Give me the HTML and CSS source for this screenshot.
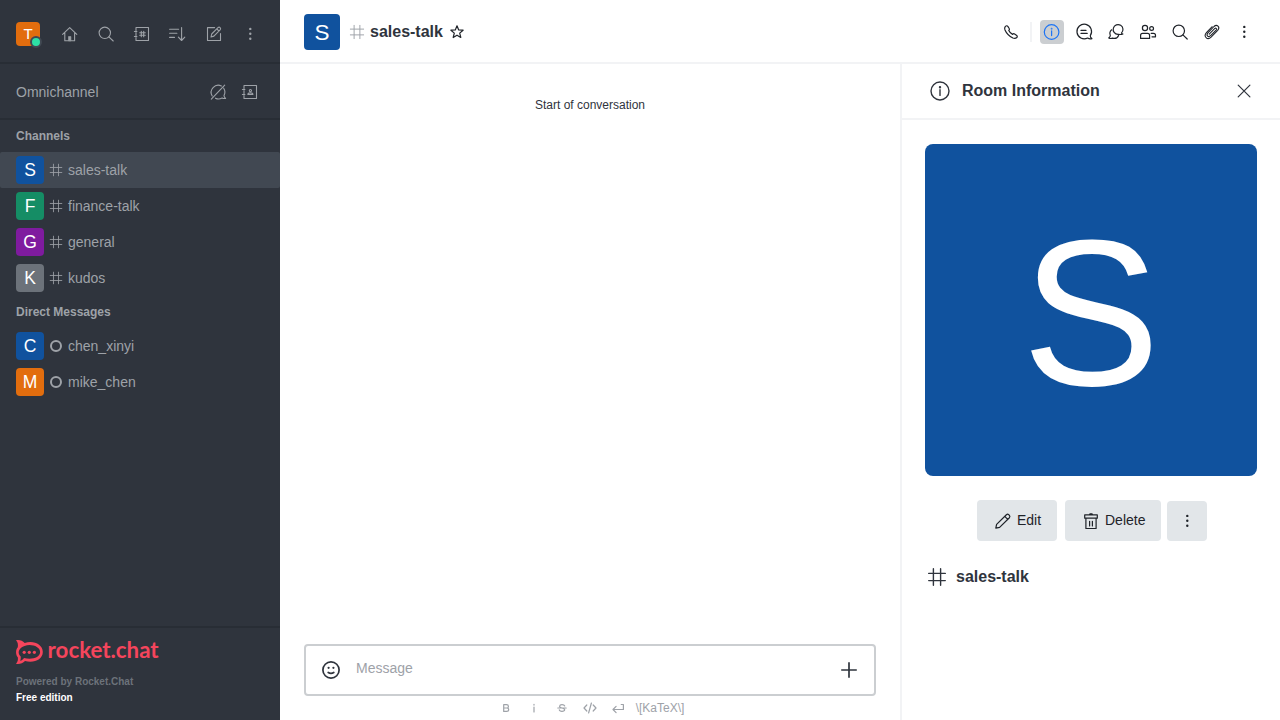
FILE: index.html
```html
<!DOCTYPE html>
<html lang="en">
<head>
<meta charset="utf-8">
<title>sales-talk</title>
<link rel="stylesheet" href="styles.css">
</head>
<body>
<svg class="defs" aria-hidden="true">
  <symbol id="hash" viewBox="0 0 20 20"><path d="M6.4 1.7v16.6M13.6 1.7v16.6M1.7 6.4h16.6M1.7 13.6h16.6"/></symbol>
  <symbol id="search" viewBox="0 0 24 24"><circle cx="10.8" cy="10.8" r="5.7"/><path d="M14.9 14.9l4.3 4.1"/></symbol>
  <symbol id="kebab" viewBox="0 0 24 24"><g fill="currentColor" stroke="none"><circle cx="12.3" cy="6.9" r="1.2"/><circle cx="12.3" cy="11.8" r="1.2"/><circle cx="12.3" cy="16.7" r="1.2"/></g></symbol>
  <symbol id="info" viewBox="0 0 24 24"><circle cx="11.6" cy="12" r="7.3"/><path d="M11.6 10.8v4.8"/><circle cx="11.6" cy="8.7" r=".3" fill="currentColor"/></symbol>
</svg>
<div class="app">
  <aside class="sidebar">
    <header class="toolbar">
      <div class="me">
        <svg class="avatar a24 orange"><text x="50%" y="50%" dy=".36em">T</text></svg>
        <span class="presence"></span>
      </div>
      <nav class="tools">
        <svg class="icon" viewBox="0 0 24 24"><path d="M4.6 12.4l7.1-6.8 7.1 6.8M6.8 10.8v8h9.8v-8"/><path d="M10.5 18.5v-4h2.4v4z" fill="currentColor" stroke-width=".6"/></svg>
        <svg class="icon"><use href="#search"/></svg>
        <svg class="icon" viewBox="0 0 24 24"><path d="M6 8.5V5.5h12.5v13H6v-2.9M6 10.5v3.1M4.4 9.5h2.5M4.4 14.5h2.5"/><path d="M11.3 9.2v5.6M13.7 9.2v5.6M9.7 10.8h5.6M9.7 13.2h5.6"/></svg>
        <svg class="icon" viewBox="0 0 24 24"><path d="M3.6 7.2h9M3.6 11.3h7.3M3.6 15.4h4.9M15.6 5.6v12.8M12.4 15.2l3.2 3.3 3.2-3.3"/></svg>
        <svg class="icon" viewBox="0 0 24 24"><path d="M12.6 5.6H5.5v12.9h13v-7"/><path d="M9 15l.7-3 6.3-6.3q1.1-1 2.1 0t0 2.1l-6.2 6.3zM14.8 6.9l2.1 2.1"/></svg>
        <svg class="icon"><use href="#kebab"/></svg>
      </nav>
    </header>
    <section class="omni">
      <span>Omnichannel</span>
      <nav class="omni-tools">
        <svg class="icon" viewBox="0 0 24 24"><path d="M6.2 16A7.1 7.1 0 0 1 15.4 6M17.7 8.2a7 7 0 0 1 .3 7.2c0 1.4.6 2.2 1.6 3-1.8.3-2.5 0-3.5-.5-2 1.3-4.8 1.3-6.6.3M5.3 19.2L18.7 5.2"/></svg>
        <svg class="icon" viewBox="0 0 24 24"><path d="M6 8.5V5.5h12.5v13H6v-2.9M6 10.5v3.1M4.4 9.5h2.5M4.4 14.5h2.5"/><circle cx="12.4" cy="10.6" r="1.1"/><path d="M9.9 14.4q0-1.7 2.5-1.7t2.5 1.7z"/></svg>
      </nav>
    </section>
    <div class="rooms">
      <h2>Channels</h2>
      <a class="room active"><svg class="avatar a28 blue"><text x="50%" y="50%" dy=".36em">S</text></svg><svg class="hash"><use href="#hash"/></svg><span>sales-talk</span></a>
      <a class="room"><svg class="avatar a28 green"><text x="50%" y="50%" dy=".36em">F</text></svg><svg class="hash"><use href="#hash"/></svg><span>finance-talk</span></a>
      <a class="room"><svg class="avatar a28 purple"><text x="50%" y="50%" dy=".36em">G</text></svg><svg class="hash"><use href="#hash"/></svg><span>general</span></a>
      <a class="room"><svg class="avatar a28 gray"><text x="50%" y="50%" dy=".36em">K</text></svg><svg class="hash"><use href="#hash"/></svg><span>kudos</span></a>
      <h2>Direct Messages</h2>
      <a class="room"><svg class="avatar a28 blue"><text x="50%" y="50%" dy=".36em">C</text></svg><i class="offline"></i><span>chen_xinyi</span></a>
      <a class="room"><svg class="avatar a28 orange"><text x="50%" y="50%" dy=".36em">M</text></svg><i class="offline"></i><span>mike_chen</span></a>
    </div>
    <footer class="brand">
      <svg class="logo" viewBox="0 0 144 24">
        <path fill-rule="evenodd" d="M0 .3C3.3-.4 6.5.6 8.7 3.1 17-.1 26.8 4.2 26.8 12S17.3 23.5 9 20.9C6.7 23.4 3.3 24.3 0 23.7 1.7 21.9 2.3 19.6 1.8 17.3-.5 14.5-.5 9.8 1.8 7.2 2.3 4.5 1.7 2 0 .3zM4.4 8.4C2 11 2.2 14 4.6 16.2c.4 1.7.2 3.1-.5 4.6 1.8-.4 3-1.3 3.9-2.8 8 2.1 16.1-.6 16.1-6S15.5 3.6 8.5 5.9C6.9 6.5 5.4 7.3 4.4 8.4z"/>
        <circle cx="8.2" cy="12.3" r="1.6"/><circle cx="13.3" cy="12.3" r="1.6"/><circle cx="18.4" cy="12.3" r="1.6"/>
        <text x="31.6" y="18" textLength="111" lengthAdjust="spacingAndGlyphs">rocket.chat</text>
      </svg>
      <p class="powered">Powered by Rocket.Chat</p>
      <p class="edition">Free edition</p>
    </footer>
  </aside>
  <main class="main">
    <header class="room-header">
      <svg class="avatar a36 blue"><text x="50%" y="50%" dy=".36em">S</text></svg>
      <svg class="hash title-hash"><use href="#hash"/></svg>
      <h1>sales-talk</h1>
      <svg class="star" viewBox="0 0 16 16"><path d="M8 1.8l1.7 4.1 4.4.3-3.4 2.9 1.1 4.4L8 11.2l-3.8 2.3 1.1-4.4-3.4-2.9 4.4-.3z"/></svg>
      <nav class="actions">
        <svg class="icon" viewBox="0 0 24 24"><path d="M6.2 6.6c1.2-1.2 2-1.1 2.8.1l1.2 1.8c.5.8.3 1.4-.4 2 .8 1.8 2 3 3.8 3.9.7-.8 1.2-.9 2-.4l1.8 1.2c1.1.8 1.2 1.6.1 2.6-1 .9-2.2.8-3.6.2-3.7-1.8-6.3-4.3-7.9-8-.5-1.3-.6-2.4.2-3.4z"/></svg>
        <span class="divider"></span>
        <svg class="icon selected"><use href="#info"/></svg>
        <svg class="icon" viewBox="0 0 24 24"><path d="M19.9 18.6c-1.1-.8-1.8-1.6-1.6-3A7.3 7.3 0 1 0 15.6 18c1.3.9 2.8 1.2 4.3.6zM9 10.4h5M9 13.4h6.2"/></svg>
        <svg class="icon" viewBox="0 0 24 24"><path d="M17.4 13.1a4.9 4.9 0 1 0-3.4 1.3c1.6.1 3.2.4 4.9-.4-.7-.2-1.1-.5-1.5-.9zM7.6 9.8a5 5 0 0 0-1.3 5.6c0 1-.6 1.8-1.6 2.6 1.3.6 2.7.6 3.9.1 2.6.8 5-.4 6-2.7"/></svg>
        <svg class="icon" viewBox="0 0 24 24"><circle cx="9" cy="8" r="2.6"/><circle cx="15.6" cy="8.5" r="1.9"/><path d="M4.6 18.4v-3q0-2 2-2h5q2 0 2 2v3zM15.2 13.4h2.3q2 0 2 2v1.4h-3.5"/></svg>
        <svg class="icon"><use href="#search"/></svg>
        <svg class="icon clip" viewBox="0 0 24 24"><path d="M12.2 6.7l-5.6 5.6c-3.7 4 .8 8.4 4.5 4.8l6.6-6.8c3-3.4-.9-6.5-3.7-3.8l-6.1 6.3c-2.2 2.7.5 5.1 2.7 2.9l5.5-5.6c1.2-1.5-.3-2.6-1.5-1.4l-5.4 5.5"/></svg>
        <svg class="icon"><use href="#kebab"/></svg>
      </nav>
    </header>
    <div class="content">
      <section class="chat">
        <p class="start">Start of conversation</p>
        <div class="composer">
          <div class="input">
            <svg class="icon emoji" viewBox="0 0 24 24"><circle cx="12" cy="12" r="8.1"/><path d="M9.2 14.5q2.8 1.8 5.6 0"/><g fill="currentColor" stroke="none"><circle cx="9.6" cy="9.8" r="1.1"/><circle cx="14.4" cy="9.8" r="1.1"/></g></svg>
            <span class="placeholder">Message</span>
            <svg class="icon plus" viewBox="0 0 24 24"><path d="M12 4.2v15.6M4.2 12h15.6"/></svg>
          </div>
          <div class="formatting">
            <svg viewBox="0 0 16 16"><path d="M5.7 4.7h2.8q1.9 0 1.9 1.7T8.5 8H5.7zM5.7 8h3q2 0 2 1.7t-2 1.7h-3z"/></svg>
            <svg viewBox="0 0 16 16"><path d="M8 7v5M8 4.3v.8"/></svg>
            <svg viewBox="0 0 16 16"><path d="M10.7 6Q10.2 4.6 8 4.6T5.6 6.3Q5.8 7.6 8 8t2.7 1.8Q10.5 11.4 8 11.4T5.3 9.8M3.8 8h8.4"/></svg>
            <svg viewBox="0 0 16 16"><path d="M4.8 5L2 8l2.8 3M11.2 5L14 8l-2.8 3M9.4 3L6.6 13"/></svg>
            <svg viewBox="0 0 16 16"><path d="M13.4 4.5v5H3M6.1 6.4L3 9.5l3.1 3.1M13.4 4.5h-2.2"/></svg>
            <span>\[KaTeX\]</span>
          </div>
        </div>
      </section>
      <aside class="panel">
        <header class="panel-header">
          <svg class="icon panel-info" viewBox="0 0 24 24"><circle cx="12" cy="12" r="9"/><path d="M12 10.8v5.6"/><circle cx="12" cy="8.3" r=".5" fill="currentColor"/></svg>
          <h2>Room Information</h2>
          <svg class="icon" viewBox="0 0 24 24"><path d="M6.2 6.2l11.7 11.7M17.9 6.2L6.2 17.9"/></svg>
        </header>
        <div class="panel-body">
          <svg class="avatar photo blue"><text x="50%" y="50%" dy=".36em">S</text></svg>
          <div class="buttons">
            <button class="btn edit"><svg viewBox="0 0 20 20"><path d="M2.8 17.2l.8-3.8L13.4 3.7q1.2-1 2.3 0l.7.7q1 1.2 0 2.3L6.6 16.4zM11.8 5.4l2.9 2.9"/></svg><span>Edit</span></button>
            <button class="btn delete"><svg viewBox="0 0 20 20"><path d="M3.7 7.2V3.9h12.6v3.3zM4.9 7.2v10.3h10.2V7.2M8.6 3.6l.4-.8h2l.4.8M8.6 10.3v4.7M11.4 10.3v4.7"/></svg><span>Delete</span></button>
            <button class="btn more"><svg class="icon"><use href="#kebab"/></svg></button>
          </div>
          <div class="name"><svg class="hash name-hash"><use href="#hash"/></svg><h3>sales-talk</h3></div>
        </div>
      </aside>
    </div>
  </main>
</div>
</body>
</html>
```
FILE: styles.css
```css
* { box-sizing: border-box; }
body { margin: 0; font-family: "Liberation Sans", Arial, sans-serif; font-size: 14px; color: #2f343d; background: #fff; }
h1, h2, h3, p { margin: 0; }
svg { display: block; flex: none; fill: none; stroke: currentColor; stroke-width: 1.2; stroke-linejoin: round; stroke-linecap: round; }
.defs { position: absolute; width: 0; height: 0; }
.app { display: flex; width: 1280px; height: 720px; overflow: hidden; }
.icon { width: 24px; height: 24px; }

.avatar { border-radius: 4px; }
.avatar text { fill: #fff; stroke: none; text-anchor: middle; }
.a24 { width: 24px; height: 24px; font-size: 15px; }
.a28 { width: 28px; height: 28px; font-size: 17.5px; }
.a36 { width: 36px; height: 36px; font-size: 22.5px; }
.photo { width: 332px; height: 332px; font-size: 207.5px; border-radius: 8px; }
.blue { background: #10529e; }
.green { background: #158d65; }
.purple { background: #7f1b9f; }
.gray { background: #6c727a; }
.orange { background: #e26d0e; }

.sidebar { width: 280px; display: flex; flex-direction: column; background: #2f343d; color: #9ea2a8; }
.toolbar { height: 64px; display: flex; align-items: center; gap: 18px; padding: 4px 16px 0; border-bottom: 2px solid #282d35; }
.toolbar .me { position: relative; margin-top: 2px; }
.presence { position: absolute; left: 14px; top: 14px; width: 12px; height: 12px; border: 2px solid #414852; border-radius: 50%; background: #2de0a5; }
.tools { display: flex; gap: 12px; margin-top: 2px; }
.tools svg, .omni-tools svg { stroke-width: 1.1; }
.omni { height: 56px; display: flex; align-items: center; justify-content: space-between; padding: 0 18px 0 16px; border-bottom: 2px solid #282d35; }
.omni-tools { display: flex; gap: 8px; padding-top: 2px; }
.omni > span { padding-top: 1px; }
.rooms { flex: 1; }
.rooms h2 { height: 32px; padding-left: 16px; font-size: 12px; line-height: 32px; }
.room { height: 36px; display: flex; align-items: center; padding-left: 16px; border-radius: 2px; }
.room.active { background: #414852; }
.hash { width: 14px; height: 14px; margin: 0 5px; }
.offline { width: 12px; height: 12px; margin: 0 6px; border: 2px solid #9ea2a8; border-radius: 50%; }
.brand { height: 94px; padding: 12px 16px 0; border-top: 2px solid #282d35; font-size: 10px; font-weight: 700; line-height: 16px; }
.logo { width: 144px; height: 24px; fill: #f5455c; stroke: none; overflow: visible; }
.logo text { font-family: Lato, sans-serif; font-size: 22.5px; font-weight: 700; }
.powered { margin-top: 10px; color: #6c727a; }
.edition { color: #fff; }

.main { flex: 1; display: flex; flex-direction: column; }
.room-header { height: 64px; display: flex; align-items: center; padding: 2px 24px 0; border-bottom: 2px solid #f2f3f5; color: #1f2329; }
.room-header h1 { font-size: 16px; line-height: 24px; color: #2f343d; }
.title-hash { width: 16px; height: 16px; margin: 0 5px 0 9px; color: #9ea2a8; }
.star { width: 16px; height: 16px; margin-left: 6px; }
.actions { display: flex; align-items: center; gap: 8px; margin-left: auto; }
.divider { width: 2px; height: 20px; margin: 0 0 0 -1px; background: #f2f3f5; }
.actions .selected { border-radius: 4px; background: #cbced1; color: #1d74f5; }
.actions .clip { stroke-width: 1.05; }
.content { flex: 1; display: flex; }
.chat { flex: 1; display: flex; flex-direction: column; justify-content: space-between; padding: 0 24px; }
.start { padding-top: 33px; font-size: 12px; line-height: 16px; text-align: center; }
.input { height: 52px; display: flex; align-items: center; padding: 0 13px; border: 2px solid #cbced1; border-radius: 4px; }
.emoji { stroke-width: 1.7; }
.plus { stroke-width: 1.7; margin-left: auto; stroke-linecap: butt; }
.placeholder { margin: -5px 0 0 13px; color: #9ea2a8; }
.formatting { height: 24px; display: flex; align-items: center; justify-content: center; gap: 12px; padding-left: 2px; font-size: 12px; color: #9ea2a8; }
.formatting svg { width: 16px; height: 16px; }
.formatting span { margin-left: -2px; }

.panel { width: 380px; border-left: 2px solid #f2f3f5; }
.panel-header { height: 56px; display: flex; align-items: center; padding: 0 24px 0 26px; border-bottom: 2px solid #f2f3f5; }
.panel-header h2 { flex: 1; margin-left: 10px; font-size: 16px; line-height: 24px; }
.panel-info { stroke-width: 1.4; }
.panel-body { padding: 24px 23px; }
.buttons { display: flex; padding: 24px 0 0 52px; align-items: flex-end; }
.btn { display: flex; align-items: center; height: 41px; padding: 0 16px; border: 0; border-radius: 4px; background: #e2e6e9; color: #1f2329; font: 14px "Liberation Sans", Arial, sans-serif; }
.btn svg { width: 20px; height: 20px; margin-right: 4px; }
.btn span { padding-bottom: 2px; }
.edit { width: 80px; }
.delete { width: 96px; margin-left: 8px; }
.more { width: 40px; height: 40px; margin-left: 6px; padding: 0 8px; }
.more svg { width: 24px; height: 24px; margin: 0; }
.name { display: flex; align-items: center; gap: 9px; padding: 24px 0 0 2px; }
.name-hash { width: 20px; height: 20px; margin: 0; stroke-width: 1.4; }
.name h3 { font-size: 16px; line-height: 24px; }
```
